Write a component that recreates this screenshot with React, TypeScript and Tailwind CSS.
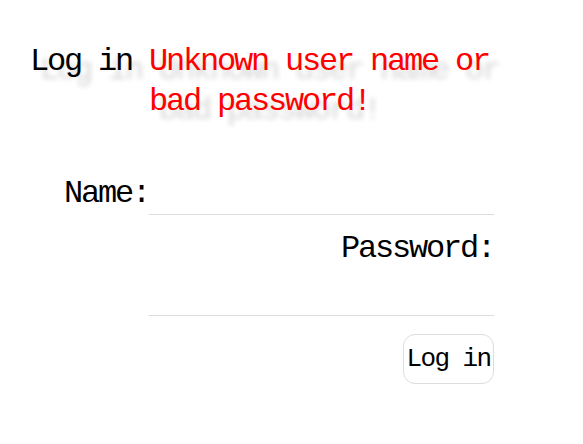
import { useState } from "react";

const mono = "font-['Liberation_Mono',monospace]";

export default function App() {
  const [name, setName] = useState("");
  const [password, setPassword] = useState("");

  return (
    <div className={`min-h-[444px] w-[583px] bg-white pl-[30px] pt-[42px] text-black ${mono}`}>
      <form
        className="grid grid-cols-[119px_345px] text-[32px] leading-[40px] tracking-[-2.2px]"
        onSubmit={(e) => e.preventDefault()}
      >
        <h1 className="font-normal [text-shadow:10px_9px_5px_rgba(0,0,0,0.16)]">Log in</h1>
        <p className="text-[#ff0000] [text-shadow:10px_9px_5px_rgba(0,0,0,0.16)]">
          Unknown user name or bad password!
        </p>

        <label htmlFor="name" className="mt-[52px] self-end pb-[5px] text-right">
          Name:
        </label>
        <input
          id="name"
          value={name}
          onChange={(e) => setName(e.target.value)}
          className="mt-[52px] h-[41px] border-b border-[#dddddd] bg-transparent outline-none"
        />

        <label htmlFor="password" className="col-start-2 mt-[10px] text-right">
          Password:
        </label>
        <input
          id="password"
          type="password"
          value={password}
          onChange={(e) => setPassword(e.target.value)}
          className="col-start-2 mt-[6px] h-[41px] border-b border-[#dddddd] bg-transparent outline-none"
        />

        <button
          type="submit"
          className="col-start-2 mt-[18px] h-[50px] w-[91px] justify-self-end rounded-[12px] border border-[#dddddd] bg-white text-[26px] tracking-[-1.6px]"
        >
          Log in
        </button>
      </form>
    </div>
  );
}
